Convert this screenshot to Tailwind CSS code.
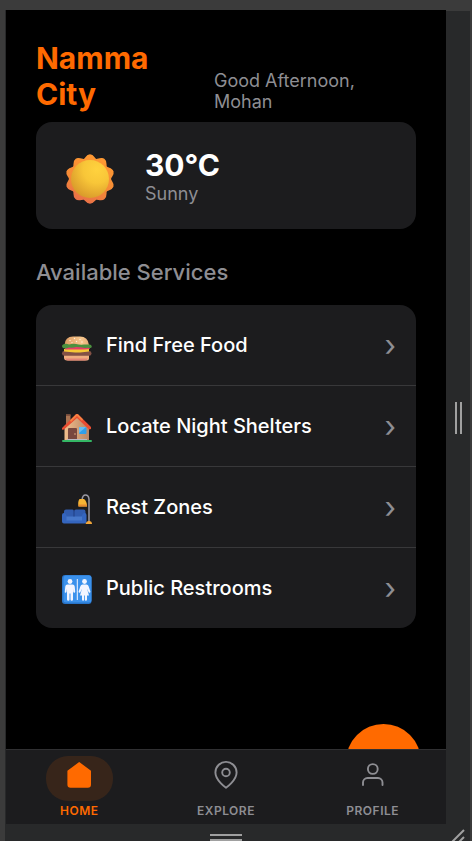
<!DOCTYPE html>
<html lang="en">
<head>
<meta charset="utf-8">
<meta name="viewport" content="width=device-width, initial-scale=1">
<title>Namma City</title>
<script src="https://cdn.jsdelivr.net/npm/@tailwindcss/browser@4"></script>
</head>
<body class="flex h-screen flex-col overflow-hidden bg-[#3b3b3b] pt-2.5 pr-0.5 pl-[5px] font-['Inter','Liberation_Sans',sans-serif]">
<div class="flex min-h-0 flex-1 bg-[#28292a] pl-px">
  <div class="relative flex min-w-0 flex-1 flex-col overflow-hidden bg-black">
    <main class="min-h-0 flex-1 overflow-hidden px-[30px] pt-[30px]">
      <header class="flex items-end justify-between">
        <h1 class="w-32 text-[30px] leading-9 font-bold text-[#ff6a00]">Namma City</h1>
        <p class="w-[202px] pr-12 text-lg leading-[21px] text-[#8e8e93]">Good Afternoon, Mohan</p>
      </header>
      <section class="mt-2.5 flex h-[107px] items-center rounded-2xl bg-[#1c1c1e] pl-[29px]" aria-label="Weather">
        <svg class="mt-1.5 size-[50px]" viewBox="0 0 50 50" aria-hidden="true">
          <defs>
            <linearGradient id="ray" x1=".7" y1="0" x2=".3" y2="1"><stop stop-color="#ff9a32"/><stop offset=".6" stop-color="#f58a36"/><stop offset="1" stop-color="#e86e4a"/></linearGradient>
            <radialGradient id="sun" cx=".68" cy=".25" r=".8"><stop stop-color="#ffd23e"/><stop offset=".45" stop-color="#f8c638"/><stop offset="1" stop-color="#d99a2b"/></radialGradient>
          </defs>
          <path fill="url(#ray)" stroke="url(#ray)" stroke-width="1.500" stroke-linejoin="round" d="M25 1c3.500 0 4.200 4 6 4.600S36.500 3 39.100 5.600c2.800 2 1 5.600 2.100 7.200s5.500 1.200 6.600 4.800c1.100 3.300-2.500 5.200-2.500 7.400s3.600 4.100 2.500 7.400c-1.100 3.600-5.500 3.200-6.600 4.800s.7 5.200-2.100 7.200c-2.600 2.600-6.300 0-8.100.600S28.500 49 25 49s-4.200-3.400-6-4-5.500 2-8.100-.600c-2.800-2-1-5.600-2.100-7.200S3.300 36 2.200 32.400C1.100 29.100 4.700 27.200 4.700 25s-3.600-4.100-2.500-7.400C3.300 14 7.700 14.400 8.800 12.800s-.7-5.200 2.100-7.200C13.500 3 17.200 6.200 19 5.600S21.500 1 25 1z"/>
          <circle cx="25" cy="25" r="19" fill="url(#sun)"/>
        </svg>
        <div class="ml-[30px]">
          <p class="text-[30px] leading-9 font-bold text-white">30°C</p>
          <p class="text-lg leading-[21px] text-[#8e8e93]">Sunny</p>
        </div>
      </section>
      <h2 class="mt-[30px] text-[22px] leading-[26px] font-medium text-[#8e8e93]">Available Services</h2>
      <nav class="mt-5 divide-y divide-[#38383a] overflow-hidden rounded-2xl bg-[#1c1c1e]" aria-label="Available services">
        <a href="#food" class="flex h-[81px] items-center pr-5 pl-[25px] text-xl font-medium text-white">
          <svg class="mt-1 size-8" viewBox="0 0 32 32" aria-hidden="true">
            <defs><linearGradient id="bun" x1="0" x2="1"><stop stop-color="#dc9b63"/><stop offset=".7" stop-color="#f6c78d"/><stop offset="1" stop-color="#e5ab76"/></linearGradient></defs>
            <g transform="translate(0 1.500)">
            <path d="M3 22h25v4q0 2-2 2H6q-3 0-3-3z" fill="#efad80"/><path d="M4 26h23q-1 2-3 2H7q-2 0-3-2z" fill="#e28577"/>
            <rect x="1" y="18.500" width="29.500" height="4.800" rx="2.400" fill="#835145"/>
            <path d="M3 16.500h25v2.500l-9 1-5 0-11-1z" fill="#f5c936"/>
            <path d="M4 13h23l2 3.500-6 .5-19 0z" fill="#e33f68"/>
            <path d="M3.500 12.500Q4 4 12 4h7q8 0 9 8.500z" fill="url(#bun)"/>
            <path d="M2 12q3-1.500 6 0 4-1 7-.5 4 1 8 .5l6 0q3 1.500 1 3.500-4-.5-6 0-4-1-9-1-3 1-7 .5-4 1.500-6 .5-2-2 0-3.500z" fill="#4c913f"/>
            <g fill="#fff0d8"><circle cx="9" cy="8" r=".7"/><circle cx="13.500" cy="6" r=".7"/><circle cx="15.500" cy="9" r=".7"/><circle cx="19" cy="7" r=".7"/><circle cx="11" cy="10" r=".6"/><circle cx="21" cy="9.500" r=".7"/></g>
            </g>
          </svg>
          <span class="ml-[13px] flex-1">Find Free Food</span>
          <span class="text-3xl font-normal text-[#8e8e93]" aria-hidden="true">›</span>
        </a>
        <a href="#shelters" class="flex h-[81px] items-center pr-5 pl-[25px] text-xl font-medium text-white">
          <svg class="mt-1 size-8" viewBox="0 0 32 32" aria-hidden="true">
            <defs><linearGradient id="wall" x1="0" x2="1"><stop stop-color="#f0be8c"/><stop offset="1" stop-color="#b98665"/></linearGradient></defs>
            <path d="M5 2.500h4.500V13H5z" fill="#aa7453"/><path d="M5 2.500h4.500v1.500H5z" fill="#82513e"/>
            <path d="M3.500 14 16 3.500l12 10.500v14H3.500z" fill="url(#wall)"/>
            <path d="M1 16 15 2.300q1-.8 2 0L30 15v2l-2 .5L16 6 3 17.500l-2 .3z" fill="#e94d31"/><path d="M9 8.200 15 2.300q1-.8 2 0l5 5-1 1.800-5-5-6 6z" fill="#f78042"/>
            <path d="M7 27.500V17q0-1 1-1h7q1 0 1 1v10.500z" fill="#79483f"/><circle cx="14" cy="22" r=".8" fill="#e7b284"/>
            <rect x="18" y="15" width="7.500" height="7" rx="1" fill="#319fe9"/><path d="m18 21 7-6h-6q-1 0-1 1z" fill="#65bdf2"/>
            <path d="M6 27h20v1H6z" fill="#b7b9c4"/><rect x="1" y="28" width="30" height="2" rx="1" fill="#34b765"/>
          </svg>
          <span class="ml-[13px] flex-1">Locate Night Shelters</span>
          <span class="text-3xl font-normal text-[#8e8e93]" aria-hidden="true">›</span>
        </a>
        <a href="#rest" class="flex h-[81px] items-center pr-5 pl-[25px] text-xl font-medium text-white">
          <svg class="mt-1 size-8" viewBox="0 0 32 32" aria-hidden="true">
            <path d="M21 7q.5-5 3.500-5t3.500 4v24" fill="none" stroke="#9998a3" stroke-width="1.500"/>
            <path d="M18.500 6h4.500q3 2 3 7.500h-8.500q-1-5 1-7.500z" fill="#f7b535"/><path d="M17.500 11.500H26v2h-8.500z" fill="#e58b30"/>
            <path d="M24.500 31q.5-3 3.500-3t3 3z" fill="#f1a63a"/>
            <path d="M3 18.500q0-2 2-2h6.500q1.500 0 1.500 2 0-2 2-2h7.500q2 0 2 2V28H3z" fill="#315cae"/>
            <path d="M1 22q0-2 2-2t3 4h14.500q1-4 3-4t2 2v6.500q0 2-2 2H3q-2 0-2-2z" fill="#3465be"/><path d="M5.500 23.500h15.500v4H5.500z" fill="#4778ca"/>
            <path d="M13 17v6.500" stroke="#203f83"/>
          </svg>
          <span class="ml-[13px] flex-1">Rest Zones</span>
          <span class="text-3xl font-normal text-[#8e8e93]" aria-hidden="true">›</span>
        </a>
        <a href="#restrooms" class="flex h-20 items-center pr-5 pl-[25px] text-xl font-medium text-white">
          <svg class="mt-1 size-8" viewBox="0 0 32 32" aria-hidden="true">
            <rect x="1" y="1" width="29.500" height="29" rx="3" fill="#2874c9"/><rect x="2.500" y="1.500" width="28" height="27" rx="2.500" fill="#3b91ec"/>
            <g fill="#f4f5ff"><circle cx="9" cy="7.500" r="2.400"/><path d="M6.500 10.500h5q2 0 2.200 2l.5 5q0 1.200-.9 1.200t-1.100-1L12 14.500v11q0 1.300-1.200 1.300T9.500 25.500v-6h-1v6q0 1.300-1.200 1.300T6 25.500v-11l-.4 3.200q-.2 1-1.100 1t-.7-1.200l.5-5q.2-2 2.200-2z"/>
            <path d="M15.800 5h1v21h-1z"/><circle cx="23.500" cy="7.500" r="2.400"/><path d="M21.500 10.500h4q1.500 0 2 1.500l1.900 5.500q.2 1-.7 1.200t-1.200-.7L26 14.500l2 7h-2v4q0 1.300-1.100 1.300t-1-1.300v-4h-.8v4q0 1.300-1 1.300T21 25.500v-4h-2l2-7-1.500 3.500q-.3.900-1.200.7t-.7-1.200l1.900-5.500q.5-1.500 2-1.500z"/></g>
          </svg>
          <span class="ml-[13px] flex-1">Public Restrooms</span>
          <span class="text-3xl font-normal text-[#8e8e93]" aria-hidden="true">›</span>
        </a>
      </nav>
    </main>
    <button type="button" aria-label="New request" class="absolute right-[25px] bottom-[25px] size-[75px] rounded-full bg-[#ff6a00]"></button>
    <nav class="relative grid h-[75px] shrink-0 grid-cols-3 border-t border-[#303032] bg-[#1c1c1e] pt-1.5 text-xs leading-[14px] font-semibold tracking-[0.5px] text-[#8e8e93]" aria-label="Main">
      <a href="#home" aria-current="page" class="flex flex-col items-center gap-[3px] text-[#ff6a00]">
        <span class="flex h-[45px] w-[67px] justify-center rounded-[22px] bg-[#ff6a00]/12 pt-1">
          <svg class="size-[30px]" viewBox="0 0 30 30" fill="currentColor" aria-hidden="true"><path d="M14.500 2.400q.7-.6 1.400 0L27 10.700V24.500q0 3.200-3.200 3.200H6.600q-3.200 0-3.200-3.200V10.700z"/></svg>
        </span>
        <span>HOME</span>
      </a>
      <a href="#explore" class="flex flex-col items-center gap-[3px]">
        <span class="flex h-[45px] justify-center pt-1">
          <svg class="size-[30px]" viewBox="0 0 30 30" fill="none" stroke="currentColor" stroke-width="1.900" stroke-linecap="round" stroke-linejoin="round" aria-hidden="true"><path d="M25.600 12.500C25.600 20.500 15 27.700 15 27.700S4.400 20.500 4.400 12.500a10.600 10.600 0 0 1 21.200 0z"/><circle cx="15" cy="12.500" r="3.800"/></svg>
        </span>
        <span>EXPLORE</span>
      </a>
      <a href="#profile" class="flex flex-col items-center gap-[3px]">
        <span class="flex h-[45px] justify-center pt-1">
          <svg class="size-[30px]" viewBox="0 0 30 30" fill="none" stroke="currentColor" stroke-width="1.900" stroke-linecap="round" stroke-linejoin="round" aria-hidden="true"><path d="M24.500 25v-2.500a4.500 4.500 0 0 0-4.500-4.500H9.500A4.500 4.500 0 0 0 5 22.500V25"/><circle cx="14.800" cy="9" r="4.900"/></svg>
        </span>
        <span>PROFILE</span>
      </a>
    </nav>
  </div>
  <div class="flex w-6 shrink-0 items-center justify-center gap-[3px] border-t border-[#3b3b3b]" aria-hidden="true">
    <span class="h-8 w-0.5 bg-[#a0a0a0]"></span><span class="h-8 w-0.5 bg-[#a0a0a0]"></span>
  </div>
</div>
<div class="flex h-[17px] shrink-0 bg-[#28292a] pl-px" aria-hidden="true">
  <div class="flex flex-1 flex-col items-center gap-[3px] pt-2.5"><span class="h-0.5 w-8 bg-[#a0a0a0]"></span><span class="h-0.5 w-8 bg-[#a0a0a0]"></span></div>
  <svg class="h-[17px] w-6" viewBox="0 0 24 17" fill="none" stroke="#a0a0a0" stroke-width="2"><path d="M6 18 18 6M13 18l5-5"/></svg>
</div>
</body>
</html>
